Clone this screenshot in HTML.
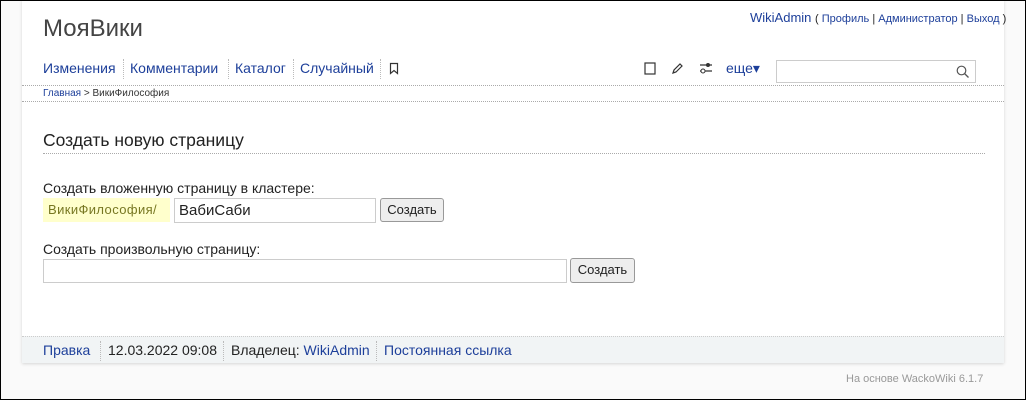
<!DOCTYPE html>
<html><head><meta charset="utf-8"><style>
*{margin:0;padding:0;box-sizing:border-box}
body{width:1026px;height:400px;background:#fafafa;font-family:"Liberation Sans",sans-serif;position:relative;overflow:hidden;color:#222}
.frame{position:absolute;left:0;top:0;width:1026px;height:400px;border:1px solid #000;z-index:9;pointer-events:none}
.a{position:absolute;white-space:nowrap}
a{color:#1d3f9a;text-decoration:none}
.panel{position:absolute;left:22px;top:0;width:982px;height:363px;background:#fff;box-shadow:0 1px 3px rgba(0,0,0,.15)}
.dot{position:absolute;border-top:1px dotted #aaa}
.sep{position:absolute;border-left:1px dotted #bbb}
.inp{position:absolute;border:1px solid #ccc;background:#fff;font-size:15px;padding:3px 4px}
.btn{position:absolute;border:1px solid #999;border-radius:3px;background:#eee;font-size:13px;text-align:center;line-height:22px}
</style></head><body>
<div class="frame"></div>
<div class="panel"></div>
<div class="a" style="left:43px;top:15px;font-size:24px;color:#444">МояВики</div>
<div class="a" style="left:750px;top:10px;font-size:13px;color:#222"><a>WikiAdmin</a> <span style="font-size:11px">( <a>Профиль</a> | <a>Администратор</a> | <a>Выход</a> )</span></div>
<div class="a" style="left:43px;top:60px;font-size:14px"><a>Изменения</a></div>
<div class="sep" style="left:123px;top:59px;height:20px"></div>
<div class="a" style="left:130px;top:60px;font-size:14px"><a>Комментарии</a></div>
<div class="sep" style="left:228px;top:59px;height:20px"></div>
<div class="a" style="left:235px;top:60px;font-size:14px"><a>Каталог</a></div>
<div class="sep" style="left:293px;top:59px;height:20px"></div>
<div class="a" style="left:300px;top:60px;font-size:14px"><a>Случайный</a></div>
<div class="sep" style="left:380px;top:59px;height:20px"></div>
<svg class="a" style="left:389px;top:62px" width="10" height="13"><path d="M1.5 1.5h7v10l-3.5-3-3.5 3z" fill="none" stroke="#333" stroke-width="1.2"/></svg>
<svg class="a" style="left:644px;top:62px" width="12" height="13"><rect x="1" y="1" width="10" height="11" fill="none" stroke="#333" stroke-width="1.2"/></svg>
<svg class="a" style="left:671px;top:62px" width="13" height="13"><path d="M2 11l1-3 6-6 2 2-6 6z" fill="none" stroke="#333" stroke-width="1.2"/></svg>
<svg class="a" style="left:699px;top:61px" width="14" height="14"><path d="M1 4h12M1 10h12" stroke="#333" stroke-width="1.2"/><circle cx="9" cy="4" r="2" fill="#333"/><circle cx="4" cy="10" r="2" fill="#fff" stroke="#333"/></svg>
<div class="a" style="left:726px;top:60px;font-size:14px"><a>еще▾</a></div>
<div class="inp" style="left:776px;top:60px;width:200px;height:23px"></div>
<svg class="a" style="left:956px;top:65px" width="14" height="14"><circle cx="5.5" cy="5.5" r="4.3" fill="none" stroke="#555" stroke-width="1.2"/><path d="M8.5 8.5l4 4" stroke="#555" stroke-width="1.3"/></svg>
<div class="dot" style="left:22px;top:85px;width:982px"></div>
<div class="a" style="left:43px;top:88px;font-size:10px;color:#333"><a>Главная</a> &gt; ВикиФилософия</div>
<div class="dot" style="left:22px;top:101px;width:982px"></div>
<div class="a" style="left:43px;top:130px;font-size:17.5px;color:#222">Создать новую страницу</div>
<div class="dot" style="left:43px;top:153px;width:942px"></div>
<div class="a" style="left:43px;top:180px;font-size:14px">Создать вложенную страницу в кластере:</div>
<div class="a" style="left:43px;top:198px;height:24px;width:127px;background:#ffffcc;color:#777722;font-size:13px;letter-spacing:0.4px;padding:4px 5px">ВикиФилософия/</div>
<div class="inp" style="left:174px;top:198px;width:202px;height:25px">ВабиСаби</div>
<div class="btn" style="left:380px;top:198px;width:64px;height:24px">Создать</div>
<div class="a" style="left:43px;top:241px;font-size:14px">Создать произвольную страницу:</div>
<div class="inp" style="left:43px;top:259px;width:524px;height:24px"></div>
<div class="btn" style="left:570px;top:258px;width:65px;height:25px">Создать</div>
<div class="a" style="left:22px;top:336px;width:982px;height:27px;background:#f1f4f5;border-top:1px dotted #ccc"></div>
<div class="a" style="left:43px;top:342px;font-size:14px"><a>Правка</a></div>
<div class="sep" style="left:100px;top:341px;height:20px"></div>
<div class="a" style="left:108px;top:342px;font-size:14px">12.03.2022 09:08</div>
<div class="sep" style="left:223px;top:341px;height:20px"></div>
<div class="a" style="left:231px;top:342px;font-size:14px">Владелец: <a>WikiAdmin</a></div>
<div class="sep" style="left:376px;top:341px;height:20px"></div>
<div class="a" style="left:384px;top:342px;font-size:14px"><a>Постоянная ссылка</a></div>
<div class="a" style="left:846px;top:373px;font-size:11px;color:#999">На основе WackoWiki 6.1.7</div>
</body></html>
